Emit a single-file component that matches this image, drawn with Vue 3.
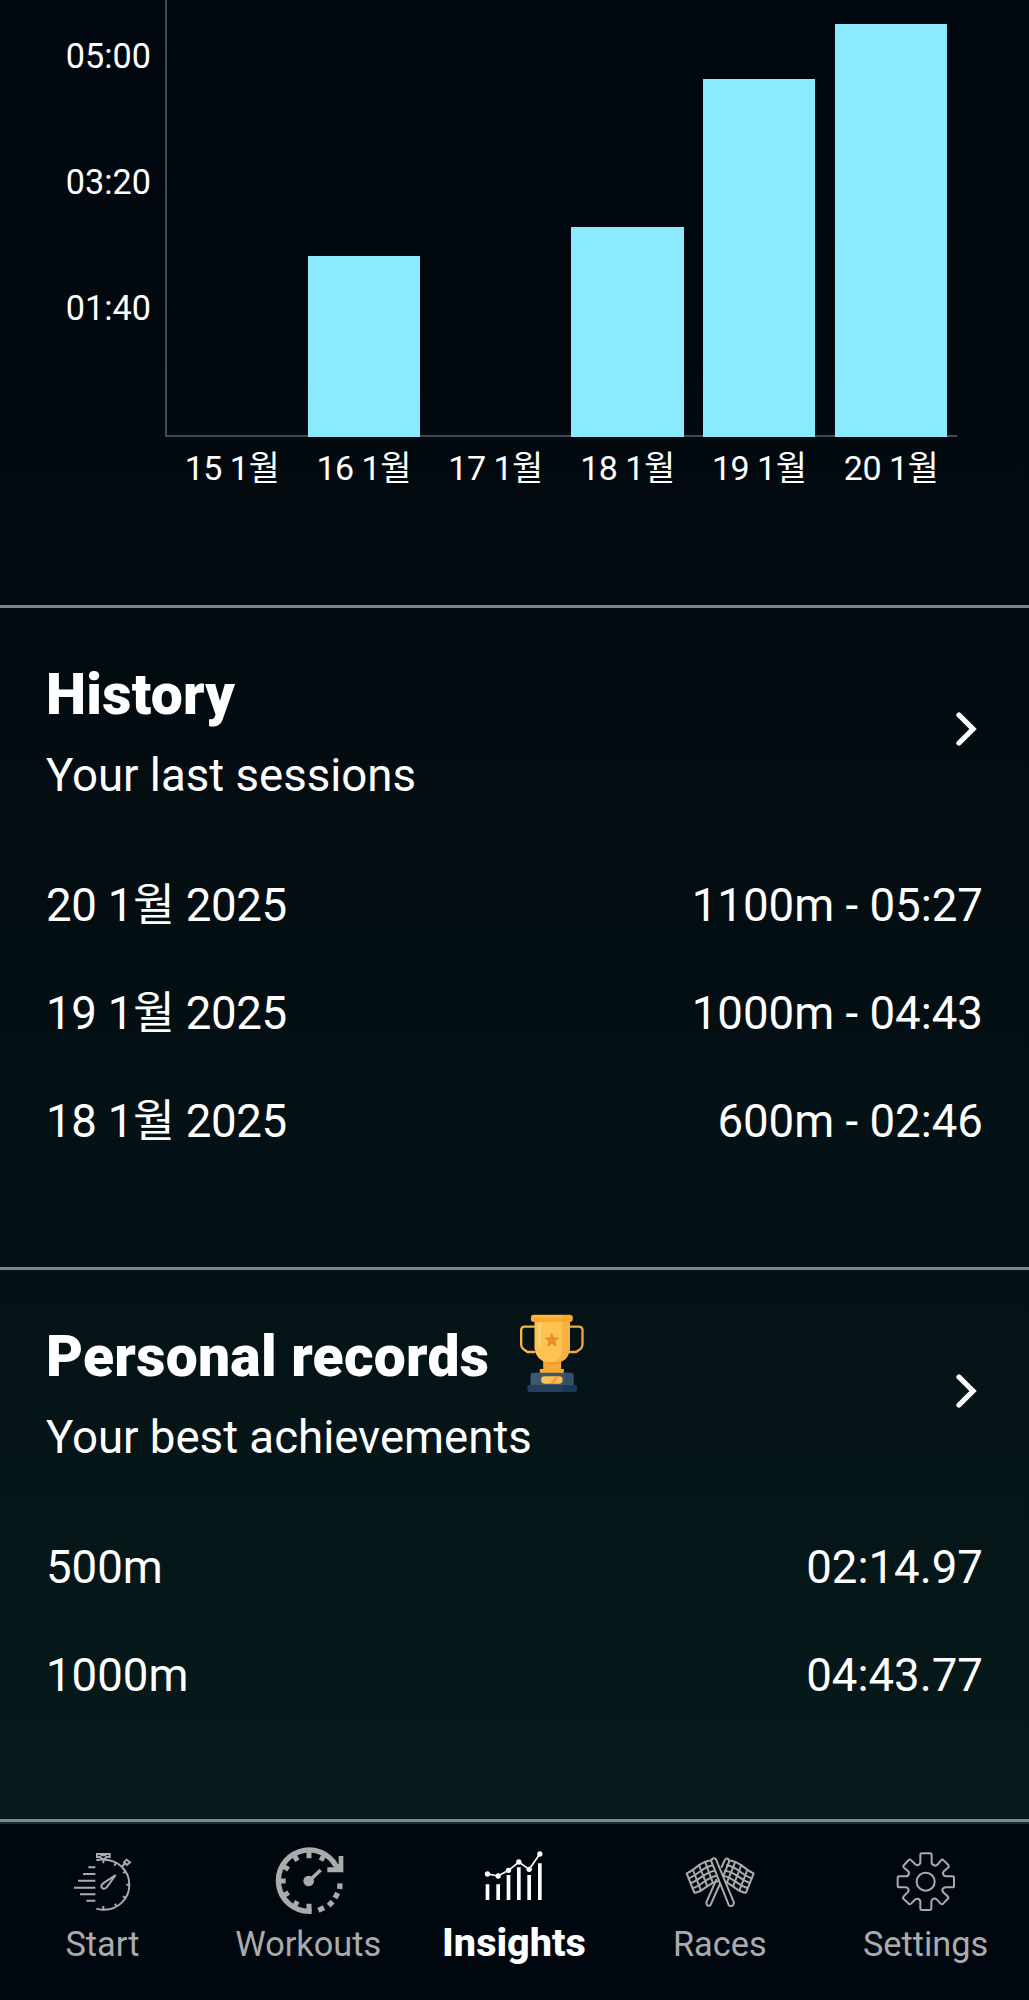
<!--
  Insights page
  Weekly time chart, last sessions, personal records and the bottom tab bar
-->
<template>
  <div class="insights-page">
    <!-- Time per day chart -->
    <section class="chart">
      <div class="y-axis">
        <span v-for="label in yLabels" :key="label">{{ label }}</span>
      </div>
      <div class="plot-col">
        <div class="plot">
          <div v-for="day in days" :key="day.label" class="slot">
            <div class="bar" :style="{ height: barHeight(day.seconds) }"></div>
          </div>
        </div>
        <div class="x-axis">
          <span v-for="day in days" :key="day.label">{{ day.label }}</span>
        </div>
      </div>
    </section>

    <!-- History and records -->
    <section v-for="block in blocks" :key="block.title" class="block">
      <div class="block-head">
        <div>
          <h2>
            {{ block.title }}
            <svg v-if="block.trophy" class="trophy" viewBox="55 70 200 240">
              <path d="M102 111H72Q61 111 61 122V164Q61 172 66 177L80 187H104" fill="none" stroke="#f9b34c" stroke-width="7" />
              <path d="M204 111H234Q245 111 245 122V164Q245 172 240 177L226 187H202" fill="none" stroke="#f3a63f" stroke-width="7" />
              <path d="M127 205H181V238H189V253H117V238H127Z" fill="#f8a833" />
              <path d="M127 207H181V220Q153 228 127 213Z" fill="#e98f24" />
              <path d="M101 90H207V176Q203 216 168 218H139Q107 214 101 176Z" fill="#ffc353" />
              <path d="M184 96H207V176Q203 216 168 218H150Q184 210 184 180Z" fill="#f9b143" />
              <path d="M112 100H121V157Q121 169 112 169Z" fill="#ffd475" />
              <rect x="90" y="75" width="126" height="22" rx="9" fill="#f9a92f" />
              <rect x="94" y="77" width="90" height="7" rx="3" fill="#ffb944" />
              <path d="M153 127L159 143L176 144L163 155L168 172L153 163L138 172L143 155L131 144L147 143Z" fill="#e98f26" />
              <path d="M98 249H209Q218 249 218 258V288H89V258Q89 249 98 249Z" fill="#3f5870" />
              <path d="M190 249H209Q218 249 218 258V288H190Z" fill="#354f68" />
              <rect x="80" y="286" width="148" height="21" rx="5" fill="#263f5c" />
              <rect x="184" y="286" width="44" height="21" rx="5" fill="#16385a" />
              <rect x="121" y="260" width="64" height="22" rx="10" fill="#ffc052" />
              <path d="M147 282L165 260H176L158 282Z" fill="#ee9b35" />
            </svg>
          </h2>
          <p>{{ block.subtitle }}</p>
        </div>
        <svg class="chevron" viewBox="0 0 22 36">
          <path d="M4 4L18 18L4 32" />
        </svg>
      </div>
      <div v-for="row in block.rows" :key="row.name" class="row">
        <span :class="{ date: !block.trophy }">{{ row.name }}</span>
        <span>{{ row.value }}</span>
      </div>
    </section>

    <!-- Tab bar -->
    <nav class="tabs">
      <a class="tab">
        <svg viewBox="39 100 240 222">
          <g class="line" stroke-width="6">
            <path d="M139 149Q151 146 163 147A75 75 0 0 1 163 297Q150 298 139 294" />
            <path d="M160 150V158M160 286V295M197 158L193 165M227 182L219 187M239 222H229M227 262L219 257M200 287L195 279" />
            <path d="M141 130H179V139H170L160 148L150 139H141ZM151 134H169" />
            <path d="M230 147L240 155L231 163L222 155ZM223 160L216 168" />
            <path d="M197 193L170 230Q163 237 156 232Q151 225 158 219Z" />
            <path d="M115 170H136M99 190H136M84 210H136M72 231H136M90 251H136M109 270H136" />
          </g>
        </svg>
        <span>Start</span>
      </a>
      <a class="tab">
        <svg viewBox="116 100 240 222">
          <g class="line">
            <path d="M244 302H236A92 92 0 1 1 317 166" stroke-width="16" />
            <path d="M236 119V143M236 302V279M144 211H166M190 131L201 150M282 131L272 150M156 165L175 176M156 257L175 246M190 291L201 272" stroke-width="15" />
            <path d="M236 211L271 178" stroke-width="11" />
            <path d="M329 218L328 235M322 247L314 262M307 273L295 285M281 291L264 299" stroke-width="16" />
          </g>
          <circle class="solid" cx="235" cy="211" r="16" />
          <path class="solid" d="M339 136V185H291V170H310L325 160V136Z" />
        </svg>
        <span>Workouts</span>
      </a>
      <a class="tab active">
        <svg viewBox="133.5 100 240 222">
          <path class="line" stroke-width="11" d="M174 221V268M206 221V268M237 193V268M268 170V268M299 193V268M331 158V268" />
          <path class="line" stroke-width="5" d="M174 190L206 196L237 179L268 154L299 176L331 130" />
          <g class="solid">
            <circle cx="174" cy="190" r="8" />
            <circle cx="206" cy="196" r="8" />
            <circle cx="237" cy="179" r="8" />
            <circle cx="268" cy="154" r="8" />
            <circle cx="299" cy="176" r="8" />
            <circle cx="331" cy="130" r="8" />
          </g>
        </svg>
        <span>Insights</span>
      </a>
      <a class="tab">
        <svg viewBox="121 100 240 222">
          <g class="line round" stroke-width="6">
            <!-- left flag -->
            <path d="M215 149C180 152 168 177 141 188L164 246C190 246 203 216 238 211" />
            <path d="M147 203C176 193 189 168 220 164M153 217C181 208 196 183 226 180M159 232C188 225 198 200 232 195" />
            <path d="M160 178L184 240M178 163L202 225M196 153L219 215" />
            <!-- right flag -->
            <path d="M267 149C302 152 315 177 342 188L319 246C292 246 280 218 248 211" />
            <path d="M336 203C306 193 293 168 262 164M330 217C302 208 287 183 256 180M324 232C296 225 283 202 252 195" />
            <path d="M323 178L299 240M305 163L281 225M287 153L262 215" />
            <!-- poles -->
            <path d="M246 169L255 149Q262 139 268 148V154L250 198M230 207L200 275Q201 289 212 284L242 217" />
            <path class="pole" d="M215 152Q216 140 228 144L283 276Q281 289 268 285Z" />
          </g>
        </svg>
        <span>Races</span>
      </a>
      <a class="tab">
        <svg viewBox="138 100 240 222">
          <g class="line round" stroke-width="6">
            <path d="M246 128H270Q275 128 275 134V155Q275 162 282 164Q288 167 294 160L303 149Q307 145 311 149L325 163Q328 167 324 171L312 181Q307 187 310 192Q312 197 318 197H338Q342 197 342 201V226Q342 230 337 230H318Q310 230 307 237Q306 242 312 247L323 257Q327 261 323 265L310 278Q306 283 301 278L291 267Q286 262 280 264Q274 267 274 274V293Q274 298 269 298H246Q241 298 241 293V274Q241 267 235 265Q229 262 224 268L214 278Q209 283 205 278L191 265Q187 261 191 257L202 246Q208 241 205 235Q203 230 196 230H178Q173 230 173 225V202Q173 197 178 197H197Q204 197 206 191Q209 185 203 180L192 171Q188 167 192 163L206 148Q210 144 214 149L225 160Q230 165 235 163Q241 161 241 154V134Q241 128 246 128Z" />
            <circle cx="257" cy="213" r="27" />
          </g>
        </svg>
        <span>Settings</span>
      </a>
    </nav>
  </div>
</template>

<script setup>
import { ref } from 'vue'

const yLabels = ['05:00', '03:20', '01:40']

// Swim time per day, in seconds
const days = ref([
  { label: '15 1월', seconds: 0 },
  { label: '16 1월', seconds: 143 },
  { label: '17 1월', seconds: 0 },
  { label: '18 1월', seconds: 166 },
  { label: '19 1월', seconds: 283.77 },
  { label: '20 1월', seconds: 327 }
])

const blocks = ref([
  {
    title: 'History',
    subtitle: 'Your last sessions',
    rows: [
      { name: '20 1월 2025', value: '1100m - 05:27' },
      { name: '19 1월 2025', value: '1000m - 04:43' },
      { name: '18 1월 2025', value: '600m - 02:46' }
    ]
  },
  {
    title: 'Personal records',
    subtitle: 'Your best achievements',
    trophy: true,
    rows: [
      { name: '500m', value: '02:14.97' },
      { name: '1000m', value: '04:43.77' }
    ]
  }
])

/** Bar height, 100 seconds is 126.3px */
function barHeight(seconds) {
  return (seconds * 1.263).toFixed(1) + 'px'
}
</script>

<style>
body { background: #01070e; }
</style>

<style scoped>
.insights-page { display: flex; flex-direction: column; height: 2000px; overflow: hidden; color: #fff; font-family: Roboto, "Noto Sans CJK KR", sans-serif; background: linear-gradient(#01070e 0, #02090f 500px, #041216 1260px, #061a1b 1819px); }

/* Chart */
.chart { display: flex; flex: none; height: 604.5px; }
.y-axis { display: flex; flex-direction: column; justify-content: flex-end; width: 151px; height: 371px; margin-right: 14px; text-align: right; }
.y-axis span { flex: none; line-height: 126px; font-size: 34.2px; }
.plot { display: flex; width: 792px; height: 437px; box-sizing: border-box; border-left: 2px solid #45484c; background: linear-gradient(#45484c, #45484c) bottom / 100% 2px no-repeat; }
.slot { display: flex; flex: 1; align-items: flex-end; justify-content: center; }
.slot:first-child { margin-left: -1px; }
.bar { width: 112.4px; background: #8ceaff; }
.x-axis { display: flex; padding-left: 1px; line-height: 62px; font-size: 34px; letter-spacing: -0.5px; }
.x-axis span { flex: 1; text-align: center; white-space: nowrap; }

/* Blocks */
.block { flex: none; padding: 53px 46px 91px; border-top: 3px solid #7d8486; }
.block:nth-of-type(3) { padding-bottom: 89px; }
.block-head { display: flex; align-items: center; justify-content: space-between; margin-bottom: 48px; }
.block-head h2 { display: flex; gap: 30px; margin: 0 0 19px; font-size: 57px; font-weight: 900; line-height: 68px; letter-spacing: 0.25px; }
.block-head p { margin: 0; font-size: 45.6px; line-height: 56px; }
.trophy { width: 67px; height: 80px; margin: -10px 0 -2px; }
.chevron { width: 22px; height: 36px; margin: 0 6px 7px 0; }
.chevron path { fill: none; stroke: #fff; stroke-width: 5.3; stroke-linecap: round; }
.row { display: flex; justify-content: space-between; font-size: 45.6px; line-height: 108.4px; }
.row:last-child { margin-bottom: -1px; }
.date { letter-spacing: -0.3px; }

/* Tab bar */
.tabs { display: flex; flex: 1; padding-top: 22px; border-top: 3px solid #7f8b8b; background: #01070e; box-shadow: inset 0 2px #1b2e31; }
.tab { display: flex; flex: 1; flex-direction: column; align-items: center; color: #a9abad; font-size: 34.3px; }
.tab svg { width: 80px; height: 74px; }
.tab span { margin: -1px 1px 0 0; line-height: 54px; }
.tab.active { color: #fff; font-size: 39.6px; font-weight: 800; }
.tab.active span { margin-top: -2px; }
.line { fill: none; stroke: currentColor; }
.solid { fill: currentColor; }
.round { stroke-linejoin: round; stroke-linecap: round; }
.pole { fill: #01070e; }
</style>
